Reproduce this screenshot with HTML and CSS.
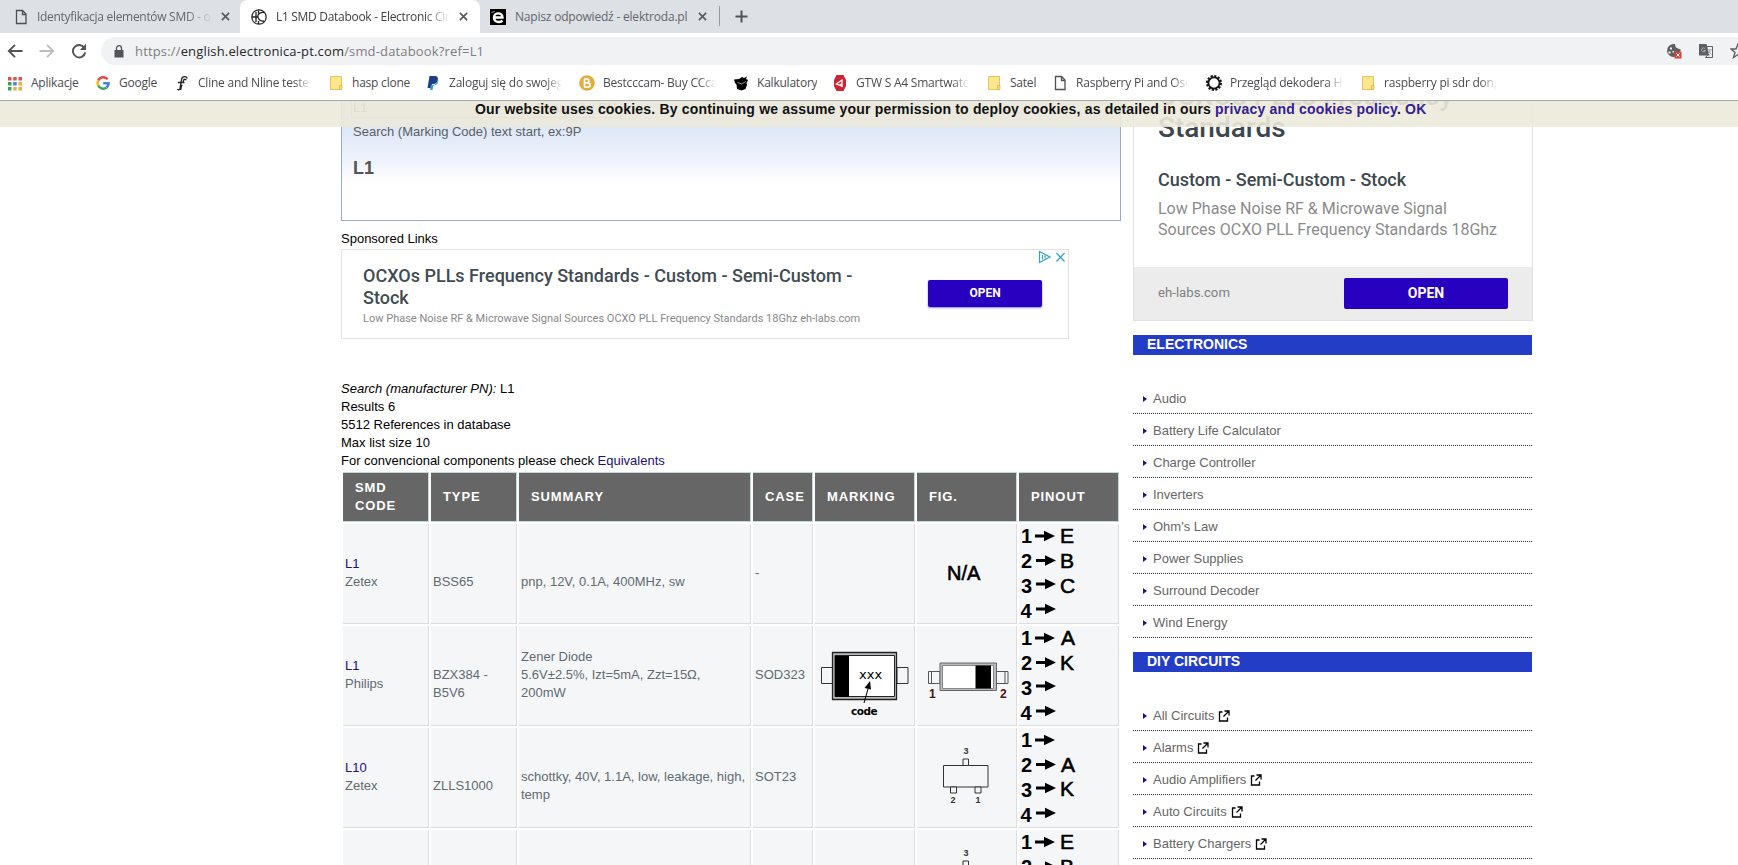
FILE: index.html
```html
<!DOCTYPE html>
<html lang="en">
<head>
<meta charset="UTF-8" />
<title>L1 SMD Databook - Electronic Circuits</title>
<link rel="stylesheet" href="styles.css">
</head>
<body>

<!-- Shared symbols -->
<svg class="symbols" width="0" height="0" aria-hidden="true">
  <symbol id="page" viewBox="0 0 16 16"><path d="M3.5 1.5h6l3.5 3.5v9.5h-9.5z M9.5 1.5v4h3.5" fill="none" stroke="#4d4f52" stroke-width="1.3"/></symbol>
  <symbol id="folder" viewBox="0 0 16 16"><path d="M2.5 1.5h11v13h-11z" fill="#fde68b" stroke="#e3c55c"/><path d="M11.5 10.500h2.500v4h-2.500z" fill="#f8dc74" stroke="#d9b94d" stroke-width=".8"/></symbol>
  <symbol id="close" viewBox="0 0 10 10"><path d="M1 1l8 8M9 1l-8 8" stroke="#54575b" stroke-width="1.8"/></symbol>
  <symbol id="ext" viewBox="0 0 12 12"><path d="M4.500 2H1.500v9h8V7.500M6.500 1H11v4.500M11 1L5.500 6.500" fill="none" stroke="#000" stroke-width="1.3"/></symbol>
  <symbol id="arrow" viewBox="0 0 20 12"><path d="M0 4.500h9V.8L20 6 9 11.200V7.500H0z" fill="#000"/></symbol>
  <symbol id="pins" viewBox="0 0 99 99">
    <g font-family="Liberation Sans" font-size="20" font-weight="bold">
      <text x="2" y="18.500">1</text><text x="2" y="44">2</text><text x="2" y="69">3</text><text x="1.500" y="94">4</text>
    </g>
    <use href="#arrow" x="16" y="6" width="20" height="12"/><use href="#arrow" x="17" y="30.500" width="20" height="12"/>
    <use href="#arrow" x="17" y="54" width="20" height="12"/><use href="#arrow" x="17" y="79" width="20" height="12"/>
  </symbol>
  <symbol id="sot23" viewBox="0 0 99 99">
    <g fill="#f5f6f8" stroke="#333">
      <path d="M26.500 37.500h44.500v21.500H26.500z"/><path d="M46 31h5.500v6.500H46zM33.500 59h6v6h-6zM58 59h6v6h-6z"/>
    </g>
    <g font-family="Liberation Sans" font-size="9" font-weight="bold" fill="#333" text-anchor="middle">
      <text x="49" y="26">3</text><text x="36" y="74.500">2</text><text x="61" y="74.500">1</text>
    </g>
  </symbol>
</svg>

<header class="browser">
  <div class="tabs">
    <div class="tab">
      <svg class="icon"><use href="#page"/></svg>
      <span class="tab-title">Identyfikacja elementów SMD - o</span>
      <svg class="close"><use href="#close"/></svg>
    </div>
    <div class="tab active">
      <svg class="icon" viewBox="0 0 16 16"><circle cx="8" cy="8" r="7.200" fill="none" stroke="#222" stroke-width="1.200"/><path d="M.8 8H5M5 3v10M5 8h2.500M13 3.500C7 3 6 7 7.500 9.500c1 1.800 3 2.800 5.500 2.500M7.500 1.500v3M7.500 12v3" fill="none" stroke="#222" stroke-width="1.300"/></svg>
      <span class="tab-title">L1 SMD Databook - Electronic Circuits</span>
      <svg class="close"><use href="#close"/></svg>
    </div>
    <div class="tab third">
      <svg class="icon" viewBox="0 0 16 16"><path d="M0 0h16v16H0z"/><path d="M4 8.500h8.500C12.500 3 4 3 4 8.500c0 5 6.500 5.500 8.500 3" fill="none" stroke="#fff" stroke-width="2.400"/><path d="M1.500 3.500l3-1" stroke="#aaa"/></svg>
      <span class="tab-title">Napisz odpowiedź - elektroda.pl</span>
      <svg class="close"><use href="#close"/></svg>
    </div>
    <div class="new-tab"><svg width="13" height="13" viewBox="0 0 13 13"><path d="M6.500 .5v12M.5 6.500h12" stroke="#505357" stroke-width="2"/></svg></div>
  </div>

  <div class="toolbar">
    <svg class="nav-icon" viewBox="0 0 16 16"><path d="M15.500 8H2M8 1.800L1.800 8 8 14.200" fill="none" stroke="#505357" stroke-width="1.900"/></svg>
    <svg class="nav-icon" viewBox="0 0 16 16"><path d="M.5 8H14M8 1.800L14.200 8 8 14.200" fill="none" stroke="#bcbec1" stroke-width="1.900"/></svg>
    <svg class="nav-icon" viewBox="0 0 16 16"><path d="M13.300 4.800A6.200 6.200 0 1 0 14.200 9.500" fill="none" stroke="#505357" stroke-width="1.900"/><path d="M15 .8v6.200H8.800z" fill="#505357"/></svg>
    <div class="omnibox">
      <svg class="lock" width="10" height="13" viewBox="0 0 10 13"><path d="M.5 5h9v7.500h-9z" fill="#505357"/><path d="M2.500 5V3.200a2.500 2.500 0 0 1 5 0V5" fill="none" stroke="#505357" stroke-width="1.300"/></svg>
      <span class="url">https://<b>english.electronica-pt.com</b>/smd-databook?ref=L1</span>
      <div class="actions">
        <svg width="16" height="16" viewBox="0 0 16 16"><path d="M7 1a6.500 6.500 0 1 0 7 7c2-1 0-2-2-2.500C10.500 5 9 4 9 1z" fill="#5c5f63"/><path d="M4 4.500h2v2H4zM2.500 8.500h2v2h-2zM6.500 8h1.500v1.500H6.500z" fill="#f1f3f4"/><path d="M8.500 8.500H15.500V15.500H8.500z" fill="#d0463b"/><path d="M10.500 10.500l3 3M13.500 10.500l-3 3" stroke="#fff"/></svg>
        <svg width="16" height="16" viewBox="0 0 16 16"><path d="M1 1h7.500l3 11.500H1z" fill="#5c5f63"/><path d="M9 3.500h5.500v11H7.500L9.500 12" fill="none" stroke="#5c5f63"/><path d="M7 5.500a2 2 0 1 0 .5 2H5.500M9.500 7h4.500M12 6v1c0 2-1 3-2 4M10.500 8l3 3.500" fill="none" stroke="#a9abad"/></svg>
        <svg width="16" height="16" viewBox="0 0 16 16"><path d="M8 1l2 5h5l-4 3.500 1.500 5L8 11.500 3.500 14.500l1.500-5L1 6h5z" fill="none" stroke="#5c5f63" stroke-width="1.400"/></svg>
      </div>
    </div>
  </div>

  <div class="bookmarks">
    <div><svg class="icon" viewBox="0 0 16 16"><path d="M1 2h3.500v3.500H1zM6.200 2h3.500v3.500H6.200zM11.500 2H15v3.500h-3.500z" fill="#d8554a"/><path d="M1 7h3.500v3.500H1z" fill="#3fa05b"/><path d="M6.200 7h3.500v3.500H6.200z" fill="#4a84dd"/><path d="M11.500 7H15v3.500h-3.500zM6.200 12h3.500v3.500H6.200zM11.500 12H15v3.500h-3.500z" fill="#e2b23c"/><path d="M1 12h3.500v3.500H1z" fill="#3fa05b"/></svg><span>Aplikacje</span></div>
    <div><svg class="icon" viewBox="0 0 16 16"><g fill="none" stroke-width="2.500"><path d="M12.600 4.300A5.600 5.600 0 0 0 3.200 5.500" stroke="#e0493c"/><path d="M3.200 5.500a5.600 5.600 0 0 0 0 5" stroke="#f0ba22"/><path d="M3.200 10.500a5.600 5.600 0 0 0 8.400 2" stroke="#3ba55a"/><path d="M11.600 12.500c1.200-1 2-2.500 2-4.300H8.200" stroke="#4581e2"/></g></svg><span>Google</span></div>
    <div><svg class="icon" viewBox="0 0 16 16"><path d="M13 3.500c0-2.500-5-3-5.500 1L6 13.500c-.3 1.800-2 1.500-2.500.5M4 7.500h6.500M12.500 4.500h-2.500c-.5 0-1 3-1 3M8.500 10.500h-1l-.8 4.500" fill="none" stroke="#222" stroke-width="1.300"/></svg><span>Cline and Nline tester</span></div>
    <div><svg class="icon"><use href="#folder"/></svg><span>hasp clone</span></div>
    <div><svg class="icon" viewBox="0 0 16 16"><path d="M4.500 1h5c3 0 4 2 3.200 4.500C12 8.500 9.500 9 7 9l-.8 4H2.500z" fill="#1d3f8a"/><path d="M13 4.500c1 3-1 6-4.500 6l-1 4.500H5l1-5c4 .5 6.500-1.500 7-5.500z" fill="#2f9fe0"/></svg><span>Zaloguj się do swojego</span></div>
    <div><svg class="icon" viewBox="0 0 16 16"><circle cx="8" cy="8" r="7.800" fill="#e0ae3c"/><path d="M5.500 4v8M5 4h3.500a2 2 0 0 1 0 3.800H5.500h3.500a2.100 2.100 0 0 1 0 4.200H5" fill="none" stroke="#fff" stroke-width="1.700"/></svg><span>Bestcccam- Buy CCcam</span></div>
    <div><svg class="icon" viewBox="0 0 16 16"><path d="M1 4.500l5-.5 3-2 2 1 3-1.500-1 2.500 2 1-1.500 3 .5 2-1.500 4-4 1.500-4.500-1.500-.5-4.500L2 8z"/><path d="M4.500 7.500L9 9l3.500-2.500" fill="none" stroke="#bbb" stroke-width=".8"/></svg><span>Kalkulatory</span></div>
    <div><svg class="icon" viewBox="0 0 16 16"><path d="M4.500 0h7L14 5v6l-2.500 5h-7L2 11V5z" fill="#cd2435"/><path d="M4.500 9L10 5v6zM8 9l2.500 3" fill="none" stroke="#fff" stroke-width="1.300"/></svg><span>GTW S A4 Smartwatch</span></div>
    <div><svg class="icon"><use href="#folder"/></svg><span>Satel</span></div>
    <div><svg class="icon"><use href="#page"/></svg><span>Raspberry Pi and Oscil</span></div>
    <div><svg class="icon" viewBox="0 0 16 16"><circle cx="8" cy="8" r="5.600" fill="none" stroke="#111" stroke-width="1.800"/><circle cx="8" cy="8" r="7" fill="none" stroke="#111" stroke-width="2" stroke-dasharray="2.200 1.465"/></svg><span>Przegląd dekodera HD</span></div>
    <div><svg class="icon"><use href="#folder"/></svg><span>raspberry pi sdr dongle</span></div>
  </div>
</header>

<div class="viewport">
  <div class="cookies">Our website uses cookies. By continuing we assume your permission to deploy cookies, as detailed in ours <a>privacy and cookies policy</a>. <a>OK</a></div>

  <div class="content">
    <main>
      <div class="search-box">
        <div class="search-row"><span class="field">L1</span><span class="btn">Search by PN</span></div>
        <p>Search (Marking Code) text start, ex:9P</p>
        <h1>L1</h1>
      </div>

      <p class="sponsored">Sponsored Links</p>
      <div class="ad-wide">
        <div class="ad-text">
          <h3>OCXOs PLLs Frequency Standards - Custom - Semi-Custom - Stock</h3>
          <p>Low Phase Noise RF &amp; Microwave Signal Sources OCXO PLL Frequency Standards 18Ghz eh-labs.com</p>
        </div>
        <a class="open">OPEN</a>
        <svg class="ad-choices" width="28" height="14" viewBox="0 0 28 14"><path d="M1.500 1.500v11L12 7zM4.500 5v4.500M7 5.500v3" fill="none" stroke="#35a3c7" stroke-width="1.200"/><path d="M18.500 3l8 8.500M26.500 3l-8 8.500" stroke="#35a3c7" stroke-width="1.300"/></svg>
      </div>

      <div class="info">
        <i>Search (manufacturer PN):</i> L1<br>
        Results 6<br>
        5512 References in database<br>
        Max list size 10<br>
        For convencional components please check <a>Equivalents</a>
      </div>

      <table>
        <colgroup><col class="c-code"><col class="c-code"><col class="c-summary"><col class="c-case"><col class="c-img"><col class="c-img"><col class="c-img"></colgroup>
        <tr><th>SMD CODE</th><th>TYPE</th><th>SUMMARY</th><th>CASE</th><th>MARKING</th><th>FIG.</th><th>PINOUT</th></tr>
        <tr>
          <td><a>L1</a><br>Zetex</td>
          <td><br>BSS65</td>
          <td><br>pnp, 12V, 0.1A, 400MHz, sw</td>
          <td>-</td>
          <td></td>
          <td class="pic"><svg viewBox="0 0 99 99"><text class="na" x="30" y="56">N/A</text></svg></td>
          <td class="pic"><svg viewBox="0 0 99 99"><use href="#pins"/><g class="pin"><text x="41" y="18.500">E</text><text x="41" y="44">B</text><text x="41" y="68.500">C</text></g></svg></td>
        </tr>
        <tr>
          <td><a>L1</a><br>Philips</td>
          <td><br>BZX384 - B5V6</td>
          <td>Zener Diode<br>5.6V±2.5%, Izt=5mA, Zzt=15Ω, 200mW</td>
          <td>SOD323</td>
          <td class="pic">
            <svg viewBox="0 0 99 99">
              <path d="M6.500 41.500h11v16h-11zM82 41.500h11v16H82z" fill="#f5f6f8" stroke="#333"/>
              <path d="M17.500 26.500h64v47h-64z" fill="#bbb" stroke="#222" stroke-width="1.300"/>
              <path d="M20 29.500h59.500v41H20z" fill="#fff" stroke="#222"/>
              <path d="M20 30h14v41H20z"/>
              <text class="xxx" x="44" y="53">xxx</text>
              <path d="M49 77l4-14" stroke="#000" fill="none"/><path d="M55 55l-5.500 7 6.500 1.500z"/>
              <text class="code" x="36" y="89">code</text>
            </svg>
          </td>
          <td class="pic">
            <svg viewBox="0 0 99 99">
              <path d="M11.500 45.500h11.500v12H11.500zM14.500 45.500v12M79.500 45.500H91v12H79.500zM88 45.500v12" fill="#f5f6f8" stroke="#555"/>
              <path d="M23 37h56.500v27.500H23z" fill="#bbb" stroke="#666"/>
              <path d="M25.500 39.500h51v23h-51z" fill="#fff" stroke="#888"/>
              <path d="M58.500 39.500H74v23H58.500z"/>
              <text class="lead" x="12" y="72">1</text><text class="lead" x="83" y="72">2</text>
            </svg>
          </td>
          <td class="pic"><svg viewBox="0 0 99 99"><use href="#pins"/><g class="pin"><text x="42" y="18.500">A</text><text x="41" y="44">K</text></g></svg></td>
        </tr>
        <tr>
          <td><a>L10</a><br>Zetex</td>
          <td><br>ZLLS1000</td>
          <td><br>schottky, 40V, 1.1A, low, leakage, high, temp</td>
          <td>SOT23</td>
          <td></td>
          <td class="pic"><svg viewBox="0 0 99 99"><use href="#sot23"/></svg></td>
          <td class="pic"><svg viewBox="0 0 99 99"><use href="#pins"/><g class="pin"><text x="42" y="44">A</text><text x="41" y="67.500">K</text></g></svg></td>
        </tr>
        <tr>
          <td><a>L11</a><br>Zetex</td>
          <td></td>
          <td></td>
          <td></td>
          <td></td>
          <td class="pic"><svg viewBox="0 0 99 99"><use href="#sot23"/></svg></td>
          <td class="pic"><svg viewBox="0 0 99 99"><use href="#pins"/><g class="pin"><text x="41" y="18.500">E</text><text x="41" y="44">B</text></g></svg></td>
        </tr>
      </table>
    </main>

    <aside>
      <div class="ad-box">
        <h2>OCXOs PLLs Frequency Standards</h2>
        <h3>Custom - Semi-Custom - Stock</h3>
        <p>Low Phase Noise RF &amp; Microwave Signal Sources OCXO PLL Frequency Standards 18Ghz</p>
        <div class="ad-foot"><span>eh-labs.com</span><a class="open">OPEN</a></div>
      </div>

      <h4>ELECTRONICS</h4>
      <ul>
        <li>Audio</li>
        <li>Battery Life Calculator</li>
        <li>Charge Controller</li>
        <li>Inverters</li>
        <li>Ohm's Law</li>
        <li>Power Supplies</li>
        <li>Surround Decoder</li>
        <li>Wind Energy</li>
      </ul>

      <h4>DIY CIRCUITS</h4>
      <ul>
        <li>All Circuits <svg class="ext"><use href="#ext"/></svg></li>
        <li>Alarms <svg class="ext"><use href="#ext"/></svg></li>
        <li>Audio Amplifiers <svg class="ext"><use href="#ext"/></svg></li>
        <li>Auto Circuits <svg class="ext"><use href="#ext"/></svg></li>
        <li>Battery Chargers <svg class="ext"><use href="#ext"/></svg></li>
      </ul>
    </aside>
  </div>
</div>

</body>
</html>
```
FILE: styles.css
```css
* {
  box-sizing: border-box;
}
body {
  margin: 0;
  height: 865px;
  overflow: hidden;
  background: #fff;
  color: #000;
  font: 13px/18px "Liberation Sans", Arial, sans-serif;
}
h1, h2, h3, h4, p, ul {
  margin: 0;
  padding: 0;
}
svg {
  display: block;
  flex: none;
}
.symbols {
  display: none;
}
.icon {
  width: 16px;
  height: 16px;
}

/* Browser window */
.browser {
  height: 101px;
  border-bottom: 1px solid #a9a9a7;
  font-family: "Open Sans", "Noto Sans", sans-serif;
  font-size: 12px;
  color: #4a4c4f;
  white-space: nowrap;
}
.tabs {
  display: flex;
  height: 33px;
  background: #dde0e5;
}
.tab {
  display: flex;
  align-items: center;
  width: 240px;
  padding: 0 10px 0 13px;
  gap: 8px;
}
.tab.active {
  background: #fff;
  border-radius: 8px 8px 0 0;
  padding: 0 12px 0 11px;
  gap: 9px;
}
.tab.third {
  padding: 0 13px 0 10px;
  gap: 9px;
}
.tab-title {
  flex: 1;
  overflow: hidden;
  letter-spacing: -0.3px;
  color: #63666b;
  -webkit-mask-image: linear-gradient(to right, #000 85%, transparent);
  mask-image: linear-gradient(to right, #000 85%, transparent);
}
.third .tab-title {
  letter-spacing: -0.2px;
  -webkit-mask-image: none;
  mask-image: none;
}
.active .tab-title {
  color: #3d4044;
}
.close {
  width: 9px;
  height: 9px;
}
.new-tab {
  display: flex;
  align-items: center;
  height: 20px;
  margin: 6px 0 0 -1px;
  padding-left: 15px;
  border-left: 1px solid #969a9f;
}
.toolbar {
  display: flex;
  align-items: center;
  gap: 16px;
  height: 36px;
  padding-left: 7px;
}
.nav-icon {
  width: 16px;
  height: 16px;
}
.omnibox {
  display: flex;
  align-items: center;
  flex: 1;
  height: 28px;
  margin-left: -2px;
  padding-left: 13px;
  background: #f0f2f4;
  border-radius: 14px 0 0 14px;
}
.url {
  margin-left: 11px;
  font-size: 13px;
  letter-spacing: 0.16px;
  color: #7b7f84;
}
.url b {
  font-weight: normal;
  color: #25282b;
}
.actions {
  display: flex;
  gap: 16px;
  width: 72px;
  margin-left: auto;
  overflow: hidden;
}
.bookmarks {
  display: grid;
  grid-template-columns: 88px 79px 154px 97px 154px 154px 99px 154px 66px 154px 154px 138px;
  height: 31px;
  padding: 0 0 3px 7px;
  align-items: center;
}
.bookmarks div {
  display: flex;
  align-items: center;
  gap: 8px;
}
.bookmarks span {
  max-width: 113px;
  overflow: hidden;
  letter-spacing: -0.22px;
}
.bookmarks div:nth-child(3) span,
.bookmarks div:nth-child(5) span,
.bookmarks div:nth-child(6) span,
.bookmarks div:nth-child(8) span,
.bookmarks div:nth-child(10) span,
.bookmarks div:nth-child(11) span,
.bookmarks div:nth-child(12) span {
  -webkit-mask-image: linear-gradient(to right, #000 85%, transparent);
  mask-image: linear-gradient(to right, #000 85%, transparent);
}

/* Page */
.viewport {
  position: relative;
  height: 764px;
  overflow: hidden;
}
.cookies {
  position: absolute;
  top: 0;
  left: 0;
  right: 0;
  z-index: 2;
  height: 26px;
  padding-left: 475px;
  background: rgba(236, 233, 219, 0.9);
  color: #111;
  font-size: 14px;
  font-weight: bold;
  line-height: 16px;
  letter-spacing: 0.18px;
  white-space: nowrap;
}
.cookies a {
  color: #33208f;
}
.content {
  display: flex;
  gap: 12px;
  padding-left: 341px;
}
main {
  width: 780px;
}
.search-box {
  height: 120px;
  padding-left: 11px;
  border: 1px solid #98aebf;
  border-top: none;
  background: linear-gradient(#d9e4f6 0, #dde7f6 26px, #eff3fc 60px, #fff 82px);
  color: #5b5f63;
}
.search-row {
  display: flex;
  gap: 4px;
  height: 17px;
  margin-left: -2px;
  line-height: 13px;
}
.field {
  width: 172px;
  padding-left: 1px;
  border: 1px solid #c99;
  border-top: none;
}
.btn {
  width: 94px;
  padding-left: 8px;
  border: 1px solid #c99;
  border-top: none;
}
.search-box p {
  margin-top: 5px;
}
.search-box h1 {
  margin-top: 16px;
  font-size: 18px;
  line-height: 22px;
  color: #555;
}
.sponsored {
  margin-top: 9px;
}
.ad-wide {
  position: relative;
  display: flex;
  align-items: flex-start;
  width: 728px;
  height: 90px;
  margin-top: 1px;
  padding: 15px 0 0 21px;
  border: 1px solid #e2e2e2;
  font-family: Roboto, sans-serif;
}
.ad-text {
  width: 565px;
}
.ad-text h3 {
  width: 520px;
  font-size: 18px;
  font-weight: 500;
  line-height: 22px;
  color: #414b51;
}
.ad-text p {
  margin-top: 2px;
  font-size: 11px;
  line-height: 16px;
  color: #888;
  white-space: nowrap;
}
.open {
  display: block;
  width: 114px;
  height: 27px;
  margin-top: 15px;
  border-radius: 2px;
  background: #2800c0;
  box-shadow: 0 1px 2px rgba(40, 0, 192, 0.5);
  color: #fff;
  font-size: 12px;
  font-weight: 700;
  line-height: 26px;
  text-align: center;
}
.ad-choices {
  position: absolute;
  top: 0;
  right: 2px;
}
.info {
  margin-top: 41px;
}
.info a, td a {
  color: #1c1070;
}
table {
  width: 780px;
  table-layout: fixed;
  border-collapse: separate;
  border-spacing: 2px;
}
.c-code { width: 86px; }
.c-summary { width: 232px; }
.c-case { width: 60px; }
.c-img { width: 100px; }
th {
  height: 50px;
  padding: 0 8px 1px 12px;
  background: #666;
  border: 1px solid #c1dad7;
  border-left: none;
  color: #fff;
  letter-spacing: 0.9px;
  text-align: left;
}
td {
  height: 100px;
  padding: 0 2px 1px;
  background: #f5f6f8;
  border-right: 1px solid #ddd;
  border-bottom: 1px solid #ddd;
  color: #5f6b70;
}
td.pic {
  padding: 0;
}
td svg {
  width: 99px;
  height: 99px;
}
.na, .pin {
  font-size: 20px;
  stroke: #000;
  stroke-width: 0.6px;
  fill: #000;
}
.pin {
  font-size: 21px;
}
.xxx {
  font: 13px "DejaVu Sans", sans-serif;
}
.code {
  font: bold 10.5px "DejaVu Sans", sans-serif;
  letter-spacing: -0.5px;
}
.lead {
  font: bold 12px "Liberation Sans", sans-serif;
  fill: #4a1515;
}

/* Sidebar */
aside {
  width: 400px;
}
.ad-box {
  height: 220px;
  overflow: hidden;
  border: 1px solid #e2e2e2;
  border-top: none;
  font-family: Roboto, sans-serif;
}
.ad-box h2, .ad-box h3, .ad-box p {
  padding: 0 24px;
  font-weight: 500;
  color: #3c474d;
}
.ad-box h2 {
  margin-top: -21px;
  font-size: 28px;
  line-height: 32px;
}
.ad-box h3 {
  margin-top: 24px;
  font-size: 18px;
  line-height: 24px;
}
.ad-box p {
  height: 66px;
  padding-top: 6px;
  font-size: 16px;
  font-weight: 400;
  line-height: 21px;
  color: #8b8b8b;
}
.ad-foot {
  display: flex;
  align-items: center;
  justify-content: space-between;
  height: 53px;
  margin-top: 9px;
  padding: 0 24px;
  background: #ececec;
  font-size: 13.2px;
  color: #808080;
}
.ad-foot span {
  margin-top: -1px;
}
.ad-foot .open {
  width: 164px;
  height: 31px;
  margin: 0;
  box-shadow: none;
  font-size: 14px;
  line-height: 31px;
}
aside h4 {
  width: 399px;
  height: 20px;
  margin-top: 14px;
  padding-left: 14px;
  background: #243dc6;
  color: #fff;
  font-size: 14px;
  line-height: 18px;
}
aside ul {
  width: 399px;
  padding-top: 27px;
  list-style: none;
}
aside li {
  display: flex;
  align-items: center;
  height: 32px;
  padding: 2px 0 0 10px;
  border-bottom: 1px dotted #333;
  color: #666;
}
aside li::before {
  content: "";
  margin: 1px 6px 0 0;
  border: solid transparent;
  border-width: 3px 0 3px 4px;
  border-left-color: #26127a;
}
.ext {
  width: 12px;
  height: 12px;
  margin-left: 4px;
}
```
